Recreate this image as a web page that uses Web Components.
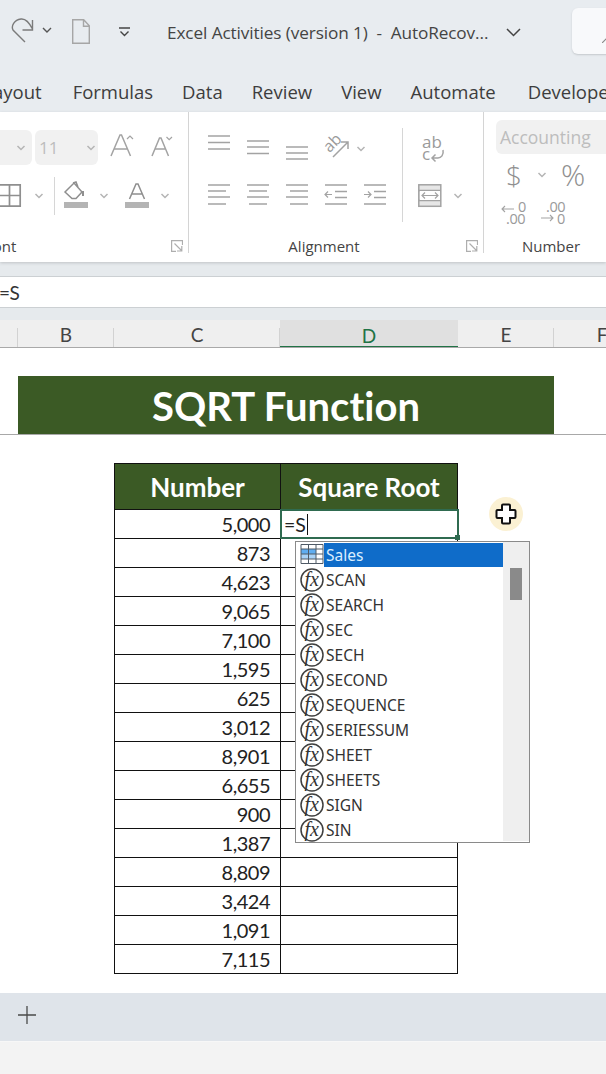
<!DOCTYPE html>
<html>
<head>
<meta charset="utf-8">
<style>
  html, body { margin: 0; padding: 0; width: 606px; height: 1074px; overflow: hidden; background: #f3f3f3; }
  body { font-family: "Open Sans", "Liberation Sans", sans-serif; display: flex; flex-direction: column; }
</style>
</head>
<body>
<xl-titlebar title-text="Excel Activities (version 1)  -  AutoRecov..."></xl-titlebar>
<xl-tabs tabs="ayout,Formulas,Data,Review,View,Automate,Developer"></xl-tabs>
<xl-ribbon></xl-ribbon>
<xl-formula>=S</xl-formula>
<xl-headers></xl-headers>
<xl-sheet numbers="5,000 873 4,623 9,065 7,100 1,595 625 3,012 8,901 6,655 900 1,387 8,809 3,424 1,091 7,115">
  SQRT Function
</xl-sheet>
<xl-sheetbar></xl-sheetbar>

<script>
const GRAY = '#a3a3a3';

function icon(left, w, h, body) {
  return `<svg style="margin-left:${left}px;flex:none;display:block;overflow:visible" width="${w}" height="${h}" viewBox="0 0 ${w} ${h}" fill="none" stroke="${GRAY}" stroke-width="1.5">${body}</svg>`;
}
function chevron(left, h, cy) {
  return icon(left, 14, h, `<path d="M3.5 ${cy - 2}l3.5 3.5 3.5-3.5" stroke="#b5b5b5"/>`);
}
function launcher(left, right) {
  return `<svg style="margin-left:${left}px;margin-right:${right}px;flex:none" width="12" height="12" viewBox="0 0 12 12" fill="none" stroke="#aeaeae" stroke-width="1.2"><path d="M11.5 5V.6H.6v10.8H5M3.5 3.5l7 7M10.8 6v5H6"/></svg>`;
}
function lines(left, h, ys, widths) {
  const w = 22;
  return icon(left, w, h, ys.map((y, i) => {
    const lw = widths ? widths[i] : w;
    const x = widths && widths.align === 'r' ? w - lw : widths && widths.align === 'c' ? (w - lw) / 2 : 0;
    return `<path d="M${x} ${y}h${lw}"/>`;
  }).join(''));
}

class XlTitlebar extends HTMLElement {
  constructor() {
    super();
    this.attachShadow({ mode: 'open' });
  }
  connectedCallback() {
    this.shadowRoot.innerHTML = `
      <style>
        :host { display: flex; align-items: center; height: 70px; flex: none; background: #e8ecf0; color: #444; overflow: hidden; position: relative; }
        svg { flex: none; }
        .name { margin-left: 37px; margin-top: -6px; font-size: 17.2px; white-space: pre; width: 339px; flex: none; letter-spacing: -.1px; }
        .search { margin-left: 51px; width: 60px; height: 46px; margin-top: -8px; background: #f8f9fb; border-radius: 6px; box-shadow: 0 1px 2px #c4c8cc; flex: none; }
        .search svg { display: block; margin: 27px 0 0 30px; }
      </style>
      <svg style="margin-left:11px;margin-top:-10px" width="23" height="26" viewBox="0 0 23 26" fill="none" stroke="#7b7b7b" stroke-width="1.4"><path d="M14 25 2 13C0 9 3 3 10 2c4-.5 8 3 11.500 10M21.500 3v10h-10"/></svg>
      <svg style="margin-left:8px;margin-top:-10px" width="10" height="6" viewBox="0 0 10 6" fill="none" stroke="#555" stroke-width="1.4"><path d="M1 1l4 4 4-4"/></svg>
      <svg style="margin-left:20px;margin-top:-8px" width="18" height="25" viewBox="0 0 18 25" fill="#e8ecf0" stroke="#a6a6a6" stroke-width="1.4"><path d="M.7.7h11l5.600 6v17.600H.7zM11.500.7v6.500h6"/></svg>
      <svg style="margin-left:29px;margin-top:-6px" width="11" height="10" viewBox="0 0 11 10" fill="none" stroke="#444" stroke-width="1.4"><path d="M0 1h11M1.500 4.500l4 4 4-4"/></svg>
      <span class="name">${this.getAttribute('title-text')}</span>
      <svg style="margin-top:-6px" width="15" height="9" viewBox="0 0 15 9" fill="none" stroke="#444" stroke-width="1.5"><path d="M1 1l6.500 6.500L14 1"/></svg>
      <div class="search"><svg width="8" height="8" viewBox="0 0 8 8" stroke="#8a8a8a" stroke-width="1.200"><path d="M0 8l8-8"/></svg></div>
    `;
  }
}

class XlTabs extends HTMLElement {
  constructor() {
    super();
    this.attachShadow({ mode: 'open' });
  }
  connectedCallback() {
    const tabs = this.getAttribute('tabs').split(',');
    this.shadowRoot.innerHTML = `
      <style>
        :host { display: flex; align-items: center; gap: 29px; height: 42px; flex: none; background: #e8ecf0; color: #3d3d3d; font-size: 18.5px; white-space: nowrap; overflow: hidden; }
        span:first-of-type { margin-left: -7px; margin-right: 2px; }
        span:last-of-type { margin-left: 3px; }
      </style>
      ${tabs.map(t => `<span>${t}</span>`).join('')}
    `;
  }
}

class XlRibbon extends HTMLElement {
  constructor() {
    super();
    this.attachShadow({ mode: 'open' });
  }
  connectedCallback() {
    const fontRow1 = `
      <div class="box" style="width:32px;border-radius:0 6px 6px 0">${chevron(14, 35, 18)}</div>
      <div class="box" style="width:63px;margin-left:3px;border-radius:6px"><span style="margin-left:4px;width:30px">11</span>${chevron(15, 35, 18)}</div>
      ${icon(12, 24, 44, `<path d="M1 28 10 7h1.500l9 21M4.500 21h13"/><path d="M17 11l3-3 3 3" stroke-width="1.200"/>`)}
      ${icon(17, 22, 44, `<path d="M1 28l7.500-18H10l7.500 18M4 21h11"/><path d="M15.500 9l2.700 2.700L21 9" stroke-width="1.200"/>`)}`;
    const fontRow2 = `
      ${icon(0, 21, 40, `<path d="M-2 8.800H20.200V30.200H-2M9.500 8.800V30.200M-2 19.500H20.200" stroke="#8f8f8f" stroke-width="1.700"/>`)}
      ${chevron(11, 40, 20)}
      <div class="vsep" style="margin-left:8px;height:38px;margin-top:1px"></div>
      ${icon(9, 24, 40, `<path d="M1 16 10 7l8 9-6 6.500H8zM9 7l3-1 2 5" stroke="#8f8f8f"/><path d="M19 15v5" stroke="#8f8f8f" stroke-width="2"/><rect x="0" y="26" width="24" height="6" fill="#b4b4b4" stroke="none"/>`)}
      ${chevron(9, 40, 20)}
      ${icon(14, 24, 40, `<path d="M4.500 23 11 8h2l6.500 15M7 18h10" stroke="#8f8f8f"/><rect x="0" y="26" width="24" height="6" fill="#b4b4b4" stroke="none"/>`)}
      ${chevron(9, 40, 20)}`;
    const orient = `
      <g transform="rotate(-45 9 16)"><text x="0" y="20" font-size="16" font-family="Open Sans" fill="#9a9a9a" stroke="none">ab</text></g>
      <path d="M9 29 24 14M17 14h7v7"/>`;
    const wrap = `
      <text x="1" y="20" font-size="17" font-family="Open Sans" fill="#9a9a9a" stroke="none">ab</text>
      <text x="1" y="32" font-size="17" font-family="Open Sans" fill="#9a9a9a" stroke="none">c</text>
      <path d="M22 22c1 5-2 8-5 8h-6M14.500 26.500 11 30l3.500 3.500"/>`;
    const merge = `
      <rect x=".8" y="8.800" width="22" height="21.500" fill="#e6e6e6"/>
      <path d="M.8 14.500h22M.8 24.500h22"/>
      <rect x="2" y="15" width="20" height="9" fill="#fff" stroke="none"/>
      <path d="M4 19.500h16M7 16.500l-3 3 3 3M17 16.500l3 3-3 3" stroke-width="1.200"/>`;
    const indent = dir => `
      <path d="M0 9h22M10 15.500h12M10 21.500h12M0 28h22"/>
      <path d="${dir === 'l' ? 'M7 18.500H0M3 15.500l-3 3 3 3' : 'M0 18.500h7M4 15.500l3 3-3 3'}" stroke-width="1.200"/>`;
    const small = (x, y, t) => `<text x="${x}" y="${y}" font-size="14.500" letter-spacing="-.4" font-family="Open Sans" fill="#9a9a9a" stroke="none">${t}</text>`;

    this.shadowRoot.innerHTML = `
      <style>
        :host { display: block; flex: none; height: 150px; background: #fff; box-shadow: 0 1px 3px #bfc3c6; position: relative; overflow: hidden; }
        .groups { display: flex; height: 141px; }
        .group { display: flex; flex-direction: column; flex: none; height: 141px; box-sizing: border-box; border-right: 1px solid #d4d4d4; }
        .row { display: flex; flex: none; }
        .box { display: flex; align-items: center; height: 35px; margin-top: 2px; background: #f1f1f1; font-size: 17px; color: #bdbdbd; flex: none; }
        .vsep { width: 1px; background: #d6d6d6; flex: none; }
        .label { display: flex; align-items: center; margin-top: auto; margin-bottom: -1px; height: 16px; font-size: 15px; line-height: 16px; color: #444; }
        .label span { flex: 1; text-align: center; }
        .font { width: 189px; padding-top: 16px; }
        .align { width: 295px; }
        .align .cols { display: flex; padding-top: 16px; }
        .num { flex: 1; border-right: 0; padding-top: 8px; }
        .glyph { color: #8f8f8f; flex: none; line-height: 34px; }
      </style>
      <div class="groups">
        <section class="group font">
          <div class="row" style="height:44px">${fontRow1}</div>
          <div class="row" style="height:40px;margin-top:4px">${fontRow2}</div>
          <div class="label"><span style="flex:none;margin-left:-15px">Font</span><b style="flex:1"></b>${launcher(0, 5)}</div>
        </section>
        <section class="group align">
          <div class="cols">
            <div style="width:213px;flex:none">
              <div class="row" style="height:44px">
                ${lines(19, 44, [8, 14.500, 21])}
                ${lines(17, 44, [13, 19, 25.500])}
                ${lines(17, 44, [19, 25, 31])}
                ${icon(16, 24, 44, orient)}
                ${chevron(6, 44, 21)}
              </div>
              <div class="row" style="height:40px;margin-top:4px">
                ${lines(19, 40, [9, 15, 21, 28], [22, 18, 22, 18])}
                ${lines(17, 40, [9, 15, 21, 28], Object.assign([22, 18, 22, 18], { align: 'c' }))}
                ${lines(17, 40, [9, 15, 21, 28], Object.assign([22, 18, 22, 18], { align: 'r' }))}
                ${icon(17, 22, 40, indent('l'))}
                ${icon(17, 22, 40, indent('r'))}
              </div>
            </div>
            <div class="vsep" style="height:94px"></div>
            <div style="flex:none">
              <div class="row" style="height:44px">${icon(18, 24, 44, wrap)}</div>
              <div class="row" style="height:40px;margin-top:4px">
                ${icon(15, 24, 40, merge)}
                ${chevron(9, 40, 20)}
              </div>
            </div>
          </div>
          <div class="label"><span>Alignment</span>${launcher(7, 5)}</div>
        </section>
        <section class="group num">
          <div class="box" style="margin:0 0 0 12px;height:34px;border-radius:6px 0 0 6px;padding-left:4px"><span style="font-size:17.500px">Accounting</span></div>
          <div class="row" style="height:34px;margin-top:4px;align-items:center">
            <span class="glyph" style="margin-left:22px;font-size:28px;font-weight:300">$</span>
            ${chevron(13, 34, 17)}
            <span class="glyph" style="margin-left:12px;font-size:30px;font-weight:300">%</span>
          </div>
          <div class="row" style="height:34px;margin-top:6px">
            ${icon(18, 26, 34, `${small(16, 14, '0')}${small(4, 26, '.00')}<path d="M0 11h12M3 8l-3 3 3 3" stroke-width="1.100"/>`)}
            ${icon(13, 26, 34, `${small(5, 14, '.00')}${small(16, 26, '0')}<path d="M0 20h12M9 17l3 3-3 3" stroke-width="1.100"/>`)}
          </div>
          <div class="label" style="padding-left:12px"><span>Number</span></div>
        </section>
      </div>
    `;
  }
}

class XlFormula extends HTMLElement {
  constructor() {
    super();
    this.attachShadow({ mode: 'open' });
  }
  connectedCallback() {
    this.shadowRoot.innerHTML = `
      <style>
        :host { display: flex; align-items: center; flex: none; box-sizing: border-box; height: 32px; margin: 14px 0 12px; background: #fff; border-top: 1px solid #ccd0d3; border-bottom: 1px solid #ccd0d3; font: 19px Lato, "Liberation Sans", sans-serif; color: #333; box-shadow: 0 -14px 0 #e6eaed, 0 12px 0 #e6eaed; }
        span { margin-left: -1px; letter-spacing: -.5px; }
      </style>
      <span><slot></slot></span>
    `;
  }
}

class XlHeaders extends HTMLElement {
  constructor() {
    super();
    this.attachShadow({ mode: 'open' });
  }
  connectedCallback() {
    const cols = [['', 18], ['B', 96], ['C', 166], ['D', 178], ['E', 96], ['F', 96]];
    this.shadowRoot.innerHTML = `
      <style>
        :host { display: flex; flex: none; box-sizing: border-box; height: 28px; background: #efefef; border-bottom: 1px solid #a9a9a9; color: #444; font: 19px Lato, "Liberation Sans", sans-serif; overflow: hidden; }
        div { flex: none; box-sizing: border-box; display: flex; justify-content: center; align-items: center; padding-top: 2px; position: relative; }
        div::after { content: ""; position: absolute; right: 0; top: 8px; bottom: 0; width: 1px; background: #d2d2d2; }
        .on { background: #e0e0e0; color: #217346; box-shadow: inset 0 -2px 0 #217346; margin-bottom: -1px; }
        .on::after { display: none; }
      </style>
      ${cols.map(([c, w]) => `<div class="${c === 'D' ? 'on' : ''}" style="width:${w}px">${c}</div>`).join('')}
    `;
  }
}

class XlAutocomplete extends HTMLElement {
  constructor() {
    super();
    this.attachShadow({ mode: 'open' });
  }
  connectedCallback() {
    const names = ['SCAN', 'SEARCH', 'SEC', 'SECH', 'SECOND', 'SEQUENCE', 'SERIESSUM', 'SHEET', 'SHEETS', 'SIGN', 'SIN'];
    const fx = `<svg width="24" height="24" viewBox="0 0 24 24" fill="none" style="flex:none"><circle cx="12" cy="12" r="11" stroke="#3f3f3f" stroke-width="1.500"/><text x="4.500" y="18" font-family="Liberation Serif" font-style="italic" font-size="20" fill="#333">fx</text></svg>`;
    const table = `<svg width="24" height="24" viewBox="0 0 24 24" fill="none" style="flex:none"><rect x="1" y="1" width="22" height="20" fill="#fff"/><rect x="1" y="6" width="15" height="5" fill="#5fadf0"/><rect x="1" y="11" width="15" height="5" fill="#a9d3f7"/><path d="M1 1.500h22v19H1zM1 6h22M1 11h22M1 16h22M8.500 1.500v19M16 1.500v19" stroke="#4f5a66"/></svg>`;
    this.shadowRoot.innerHTML = `
      <style>
        :host { display: flex; box-sizing: border-box; position: absolute; left: 295px; top: 193px; width: 235px; height: 302px; background: #fff; border: 1px solid #8a8a8a; font: 15.500px "Noto Sans", "Open Sans", sans-serif; color: #333; }
        ul { list-style: none; margin: 0; padding: 0 0 0 4px; width: 203px; flex: none; }
        li { display: flex; align-items: center; height: 25px; }
        li span { flex: 1; padding-left: 2px; height: 24px; line-height: 25px; }
        li.on span { background: #0f6cc9; color: #dbeeff; padding-left: 2px; }
        .bar { flex: 1; background: #efefef; margin-bottom: 1px; padding: 26px 7px 0 7px; }
        .bar i { display: block; height: 32px; background: #8a8a8a; }
      </style>
      <ul>
        <li class="on">${table}<span>Sales</span></li>
        ${names.map(n => `<li>${fx}<span>${n}</span></li>`).join('')}
      </ul>
      <div class="bar"><i></i></div>
    `;
  }
}

class XlSheet extends HTMLElement {
  constructor() {
    super();
    this.attachShadow({ mode: 'open' });
  }
  connectedCallback() {
    const nums = this.getAttribute('numbers').split(' ');
    this.shadowRoot.innerHTML = `
      <style>
        :host { display: grid; grid-template-columns: 18px 96px 166px 178px 96px 1fr; grid-template-rows: 28px 58px 1px 28px auto; flex: none; height: 645px; background: #fff; position: relative; font-family: Lato, "Liberation Sans", sans-serif; color: #222; overflow: hidden; font-variant-ligatures: none; }
        .banner { grid-column: 2 / 6; grid-row: 2; background: #3b5a25; color: #fff; font-size: 40px; font-weight: 700; display: flex; justify-content: center; align-items: center; padding-top: 2px; box-sizing: border-box; }
        .rule { grid-column: 1 / -1; grid-row: 3; background: #a8a8a8; }
        .table { grid-column: 3 / 5; grid-row: 5; align-self: start; display: grid; grid-template-columns: 166px 177px; grid-template-rows: 46px; grid-auto-rows: 29px; border-top: 1px solid #111; border-left: 1px solid #111; width: 344px; box-sizing: border-box; }
        .table > div { box-sizing: border-box; border-right: 1px solid #111; border-bottom: 1px solid #111; display: flex; align-items: center; font-size: 20px; letter-spacing: -.5px; }
        .table > .th { background: #3b5a25; color: #fff; font-weight: 700; font-size: 26px; letter-spacing: 0; justify-content: center; }
        .n { justify-content: flex-end; padding-right: 10px; }
        .edit { position: absolute; left: 280px; top: 161px; width: 179px; height: 30px; box-sizing: border-box; border: 2px solid #2f6b50; background: #fff; display: flex; align-items: center; padding-left: 2px; font-size: 19.500px; }
        .edit i { width: 1px; height: 21px; background: #111; margin-left: 1px; }
        .edit b { position: absolute; right: -3px; bottom: -3px; width: 5px; height: 5px; background: #2f6b50; }
        .cursor { position: absolute; left: 489px; top: 149px; width: 34px; height: 34px; border-radius: 50%; background: #fbf1d3; display: flex; justify-content: center; align-items: center; }
      </style>
      <div class="banner"><slot></slot></div>
      <div class="rule"></div>
      <div class="table">
        <div class="th">Number</div><div class="th">Square Root</div>
        ${nums.map(n => `<div class="n">${n}</div><div></div>`).join('')}
      </div>
      <div class="edit">=S<i></i><b></b></div>
      <xl-autocomplete></xl-autocomplete>
      <div class="cursor"><svg width="22" height="22" viewBox="0 0 22 22"><path d="M8 1.500h6a1 1 0 0 1 1 1V7h4.500a1 1 0 0 1 1 1v6a1 1 0 0 1-1 1H15v4.500a1 1 0 0 1-1 1H8a1 1 0 0 1-1-1V15H2.500a1 1 0 0 1-1-1V8a1 1 0 0 1 1-1H7V2.500a1 1 0 0 1 1-1z" fill="#fff" stroke="#111" stroke-width="2"/></svg></div>
    `;
  }
}

class XlSheetbar extends HTMLElement {
  constructor() {
    super();
    this.attachShadow({ mode: 'open' });
  }
  connectedCallback() {
    this.shadowRoot.innerHTML = `
      <style>
        :host { display: flex; align-items: center; flex: none; height: 44px; padding: 0 0 4px 18px; background: #dfe4ea; border-bottom: 1px solid #f7f7f7; }
      </style>
      <svg width="18" height="18" viewBox="0 0 18 18" stroke="#4a4a4a" stroke-width="1.300"><path d="M9 0v18M0 9h18"/></svg>
    `;
  }
}

customElements.define('xl-titlebar', XlTitlebar);
customElements.define('xl-tabs', XlTabs);
customElements.define('xl-ribbon', XlRibbon);
customElements.define('xl-formula', XlFormula);
customElements.define('xl-headers', XlHeaders);
customElements.define('xl-autocomplete', XlAutocomplete);
customElements.define('xl-sheet', XlSheet);
customElements.define('xl-sheetbar', XlSheetbar);
</script>
</body>
</html>
